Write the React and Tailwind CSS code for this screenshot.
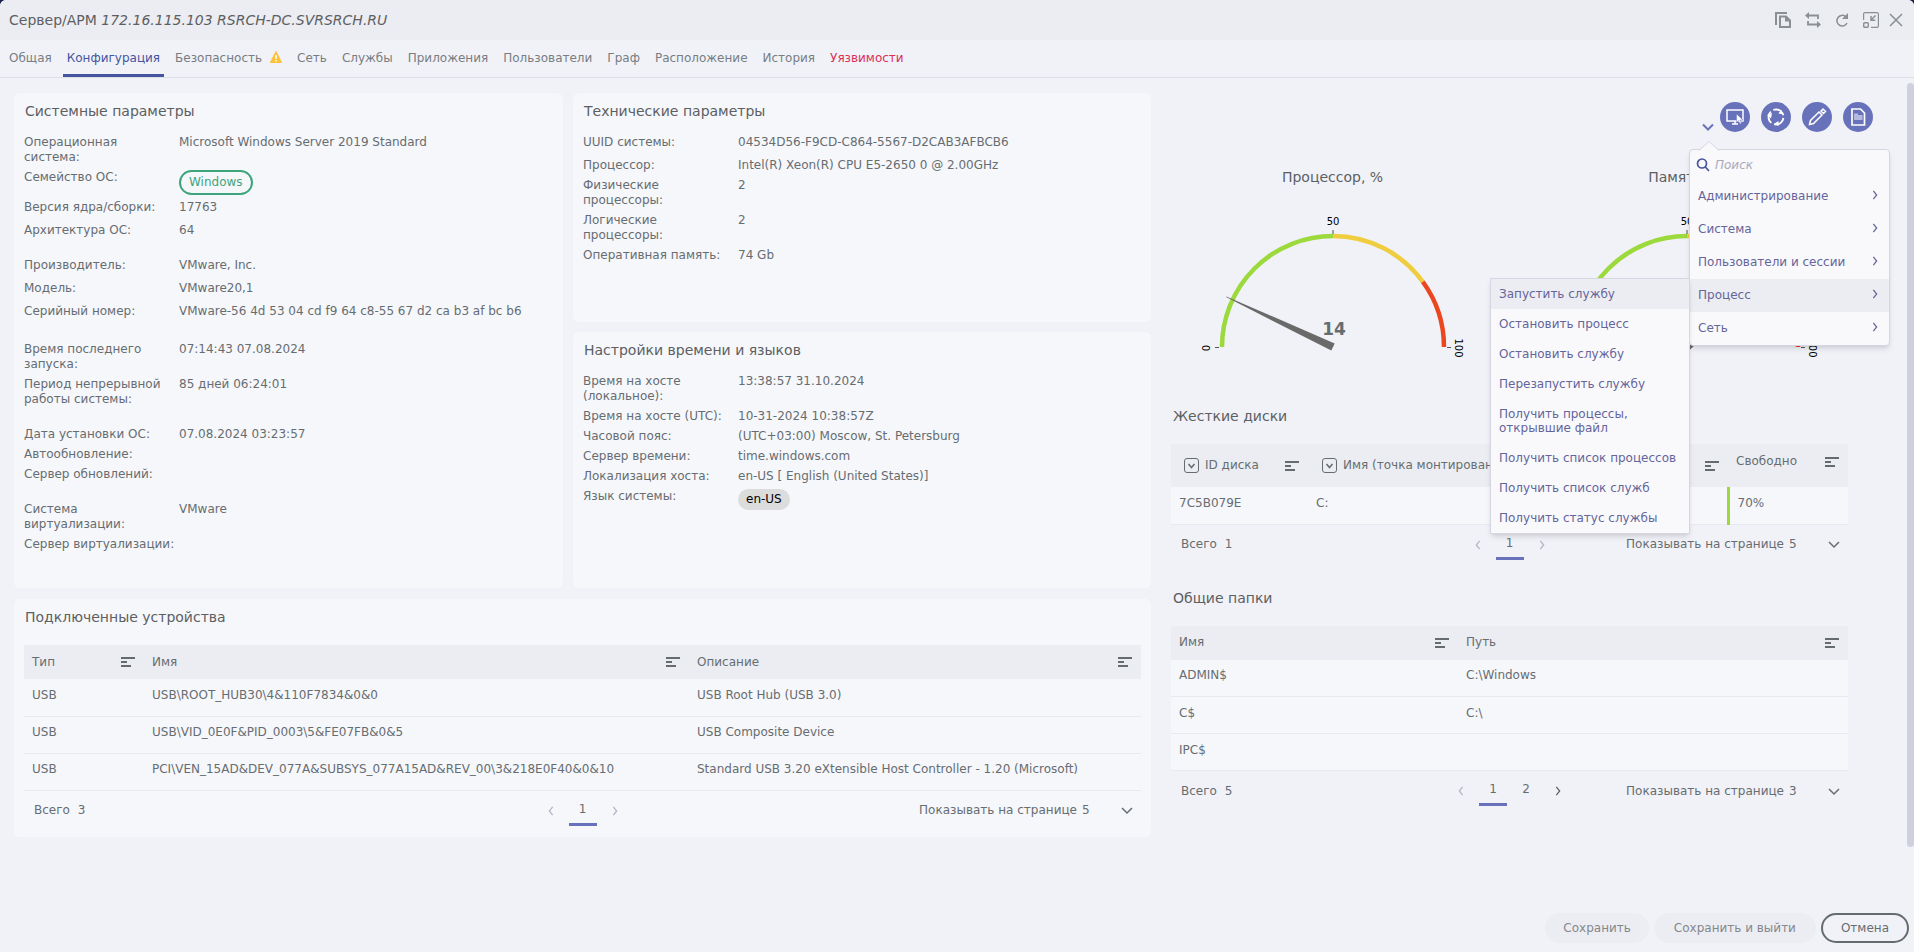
import { useState } from "react";

const tabs = [
  { name: "Общая" },
  { name: "Конфигурация" },
  { name: "Безопасность", warning: true },
  { name: "Сеть" },
  { name: "Службы" },
  { name: "Приложения" },
  { name: "Пользователи" },
  { name: "Граф" },
  { name: "Расположение" },
  { name: "История" },
  { name: "Уязвимости", danger: true },
];

// tall - row with the bigger bottom padding, last - last row of its group
const systemParams = [
  { label: "Операционная система:", value: "Microsoft Windows Server 2019 Standard" },
  { label: "Семейство ОС:", badge: "Windows" },
  { label: "Версия ядра/сборки:", value: "17763", tall: true },
  { label: "Архитектура ОС:", value: "64", last: true },
  { label: "Производитель:", value: "VMware, Inc.", tall: true },
  { label: "Модель:", value: "VMware20,1", tall: true },
  { label: "Серийный номер:", value: "VMware-56 4d 53 04 cd f9 64 c8-55 67 d2 ca b3 af bc b6", tall: true, last: true },
  { label: "Время последнего запуска:", value: "07:14:43 07.08.2024" },
  { label: "Период непрерывной работы системы:", value: "85 дней 06:24:01", last: true },
  { label: "Дата установки ОС:", value: "07.08.2024 03:23:57" },
  { label: "Автообновление:" },
  { label: "Сервер обновлений:", last: true },
  { label: "Система виртуализации:", value: "VMware" },
  { label: "Сервер виртуализации:" },
];

const techParams = [
  { label: "UUID системы:", value: "04534D56-F9CD-C864-5567-D2CAB3AFBCB6", tall: true },
  { label: "Процессор:", value: "Intel(R) Xeon(R) CPU E5-2650 0 @ 2.00GHz" },
  { label: "Физические процессоры:", value: "2" },
  { label: "Логические процессоры:", value: "2" },
  { label: "Оперативная память:", value: "74 Gb" },
];

const timeParams = [
  { label: "Время на хосте (локальное):", value: "13:38:57 31.10.2024" },
  { label: "Время на хосте (UTC):", value: "10-31-2024 10:38:57Z" },
  { label: "Часовой пояс:", value: "(UTC+03:00) Moscow, St. Petersburg" },
  { label: "Сервер времени:", value: "time.windows.com" },
  { label: "Локализация хоста:", value: "en-US [ English (United States)]" },
  { label: "Язык системы:", chip: "en-US" },
];

const devices = [
  ["USB", "USB\\ROOT_HUB30\\4&110F7834&0&0", "USB Root Hub (USB 3.0)"],
  ["USB", "USB\\VID_0E0F&PID_0003\\5&FE07FB&0&5", "USB Composite Device"],
  [
    "USB",
    "PCI\\VEN_15AD&DEV_077A&SUBSYS_077A15AD&REV_00\\3&218E0F40&0&10",
    "Standard USB 3.20 eXtensible Host Controller - 1.20 (Microsoft)",
  ],
];

const folders = [
  ["ADMIN$", "C:\\Windows"],
  ["C$", "C:\\"],
  ["IPC$", ""],
];

const menuItems = ["Администрирование", "Система", "Пользователи и сессии", "Процесс", "Сеть"];

const processItems = [
  "Запустить службу",
  "Остановить процесс",
  "Остановить службу",
  "Перезапустить службу",
  "Получить процессы, открывшие файл",
  "Получить список процессов",
  "Получить список служб",
  "Получить статус службы",
];

function Chevron({ dir = "down", className = "" }) {
  const paths = {
    down: "M1 3l5 5 5-5",
    left: "M8 1L4 6l4 5",
    right: "M4 1l4 5-4 5",
  };
  return (
    <svg viewBox="0 0 12 12" className={className} fill="none" stroke="currentColor" strokeWidth="1.5">
      <path d={paths[dir]} />
    </svg>
  );
}

function SortButton({ name }) {
  return (
    <button type="button" aria-label={`Сортировать: ${name}`} className="shrink-0 text-[#646c70]">
      <svg viewBox="0 0 14 10" className="block h-[10px] w-[14px]" fill="currentColor">
        <path d="M0 0h14v2H0zM0 4h6v2H0zM0 8h10v2H0z" />
      </svg>
    </button>
  );
}

function FilterBox({ name }) {
  return (
    <button type="button" aria-label={`Фильтр: ${name}`} className="shrink-0">
      <svg viewBox="0 0 15 15" className="block h-[15px] w-[15px]" fill="none" stroke="currentColor">
        <rect x="0.5" y="0.5" width="14" height="14" rx="2.5" />
        <path d="M4.5 6l3 3.5 3-3.5" strokeWidth="1.5" />
      </svg>
    </button>
  );
}

function Card({ title, className = "", children }) {
  return (
    <section className={`rounded-md bg-[#f6f7fb] px-[10px] pt-2 ${className}`}>
      <h2 className="pl-px text-sm leading-5 text-[#5c6062]">{title}</h2>
      {children}
    </section>
  );
}

function Params({ rows }) {
  return (
    <dl className="mt-[14px]">
      {rows.map((row) => (
        <div key={row.label} className={`flex ${row.tall ? "pb-2" : "pb-[5px]"} ${row.last ? "mb-[15px]" : ""}`}>
          <dt className="w-[155px] shrink-0 pr-[3px]">{row.label}</dt>
          <dd>
            {row.value}
            {row.badge && (
              <span className="flex h-[25px] items-center rounded-full border-2 border-[#3da57c] px-2 text-[#3da57c]">
                {row.badge}
              </span>
            )}
            {row.chip && (
              <span className="flex h-[21px] items-center rounded-full bg-[#dcdcdc] px-2 text-black">{row.chip}</span>
            )}
          </dd>
        </div>
      ))}
    </dl>
  );
}

function Pager({ total, pages, perPage, id }) {
  return (
    <div className="grid h-10 grid-cols-[1fr_auto_1fr] items-center">
      <div className="flex gap-2 pl-[10px]">
        <span>Всего</span>
        <span>{total}</span>
      </div>
      <nav className="flex items-center gap-[5px]">
        <button type="button" disabled aria-label="Назад" className="flex w-[26px] justify-center text-[#b3b3c6]">
          <Chevron dir="left" className="h-[10px] w-[10px]" />
        </button>
        {pages.map((p) => (
          <button
            key={p}
            type="button"
            className={`h-[30px] w-[28px] border-b-[3px] ${p === 1 ? "border-[#6872ba]" : "border-transparent"}`}
          >
            {p}
          </button>
        ))}
        <button
          type="button"
          disabled={pages.length === 1}
          aria-label="Вперед"
          className="flex w-[26px] justify-center text-[#5c6062] disabled:text-[#b3b3c6]"
        >
          <Chevron dir="right" className="h-[10px] w-[10px]" />
        </button>
      </nav>
      <div className="flex items-center justify-end">
        <label htmlFor={id} className="mr-[5px]">
          Показывать на странице
        </label>
        <div className="relative w-[59px]">
          <select id={id} defaultValue={perPage} className="block w-full appearance-none bg-transparent">
            <option>{perPage}</option>
          </select>
          <Chevron className="pointer-events-none absolute top-[2px] right-2 h-3 w-3" />
        </div>
      </div>
    </div>
  );
}

function Th({ children, width = "" }) {
  return (
    <th className={`p-0 font-normal ${width}`}>
      <div className="flex items-center justify-between pr-[9px] pl-2">
        <span>{children}</span>
        <SortButton name={children} />
      </div>
    </th>
  );
}

function Gauge({ title, value }) {
  const angle = (value / 100) * 180;
  return (
    <div className="flex flex-col items-center">
      <h2 className="text-sm leading-5 text-[#5c6062]">{title}</h2>
      <svg viewBox="0 0 280 150" className="mt-[25px] h-[150px] w-[280px]" fontSize="10" textAnchor="middle">
        <g fill="none" strokeWidth="4.5">
          <path d="M29 135A111 111 0 0 1 140 24" stroke="#9cd93c" />
          <path d="M140 24A111 111 0 0 1 229.8 69.8" stroke="#efcd3f" />
          <path d="M229.8 69.8A111 111 0 0 1 251 135" stroke="#ec4620" />
        </g>
        <path d="M140 18v4M22 135.500h4M254 135.500h4" stroke="#555" />
        <text x="140" y="13">50</text>
        <text transform="translate(17 136) rotate(-90)">0</text>
        <text transform="translate(262 136) rotate(90)">100</text>
        <text x="141" y="123" fontSize="17" fontWeight="bold" fill="#646e70">
          {value}
        </text>
        <path d="M22 134.600L140 131v8L22 135.400z" fill="#6a6a6a" transform={`rotate(${angle} 140 135)`} />
      </svg>
    </div>
  );
}

function RoundButton({ label, children }) {
  return (
    <button
      type="button"
      aria-label={label}
      className="flex h-[30px] w-[30px] items-center justify-center rounded-full bg-[#6872ba] text-white"
    >
      <svg viewBox="0 0 20 20" className="h-5 w-5" fill="none" stroke="currentColor" strokeWidth="1.5">
        {children}
      </svg>
    </button>
  );
}

function ActionsMenu() {
  return (
    <div className="absolute top-[28px] left-[-13px] z-10 w-[201px] rounded-sm border border-[#d5d6e2] bg-[#f9f9fc] text-[#65659a] shadow-md">
      <svg viewBox="0 0 20 10" className="absolute -top-[9px] left-[9px] h-[10px] w-5" fill="#f9f9fc" stroke="#d5d6e2">
        <path d="M0 9.500L10 0.500l10 9" />
      </svg>
      <div className="flex h-[30px] items-center gap-[5px] pl-[6px]">
        <svg viewBox="0 0 14 14" className="h-[14px] w-[14px] shrink-0" fill="none" stroke="#44549e" strokeWidth="1.700">
          <circle cx="6" cy="5.500" r="4.500" />
          <path d="M9.300 9l3.700 4" />
        </svg>
        <input
          type="text"
          aria-label="Поиск"
          placeholder="Поиск"
          className="w-full min-w-0 bg-transparent italic outline-none placeholder:text-[#a9a9ba]"
        />
      </div>
      <ul>
        {menuItems.map((item) => (
          <li key={item} className="relative">
            <button
              type="button"
              className={`flex h-[33px] w-full items-center justify-between pr-[9px] pl-2 ${
                item === "Процесс" ? "bg-[#ecedf2]" : ""
              }`}
            >
              {item}
              <Chevron dir="right" className="mb-1 h-[10px] w-[10px]" />
            </button>
            {item === "Процесс" && (
              <ul className="absolute -top-px right-full w-[200px] border border-[#d5d6e2] bg-[#f9f9fc] shadow-md">
                {processItems.map((p, i) => (
                  <li key={p}>
                    <button
                      type="button"
                      className={`block w-full py-2 pr-1 pl-2 text-left leading-[14px] ${i === 0 ? "bg-[#ecedf2]" : ""}`}
                    >
                      {p}
                    </button>
                  </li>
                ))}
              </ul>
            )}
          </li>
        ))}
      </ul>
    </div>
  );
}

function Header() {
  return (
    <header className="flex h-10 shrink-0 items-center justify-between bg-[#ecedf2] pr-[11px] pl-[9px]">
      <h1 className="text-sm text-[#5c6062]">
        Сервер/АРМ <i>172.16.115.103 RSRCH-DC.SVRSRCH.RU</i>
      </h1>
      <div className="flex items-center gap-[14px] text-[#8a8f93]">
        <button type="button" aria-label="Копировать">
          <svg viewBox="0 0 16 16" className="h-4 w-4" fill="none" stroke="currentColor" strokeWidth="2">
            <path d="M1 13V1h11" />
            <path d="M5 4.500h6L15 8.500V15H5z" />
            <path d="M10 4v5.500h5z" fill="currentColor" stroke="none" />
          </svg>
        </button>
        <button type="button" aria-label="Переключить">
          <svg viewBox="0 0 16 16" className="h-4 w-4" fill="none" stroke="currentColor" strokeWidth="1.800">
            <path d="M13 7V3.500H2M3 9v3.500h11" />
            <path d="M4 0v7L0 3.500zM12 9v7l4-3.500z" fill="currentColor" stroke="none" />
          </svg>
        </button>
        <button type="button" aria-label="Обновить">
          <svg viewBox="0 0 14 16" className="h-4 w-[14px]" fill="none" stroke="currentColor" strokeWidth="1.500">
            <path d="M10.500 4.500A5.300 5.300 0 1 0 12 11" />
            <path d="M13 1v6H7z" fill="currentColor" stroke="none" />
          </svg>
        </button>
        <button type="button" aria-label="Свернуть">
          <svg viewBox="0 0 16 16" className="h-4 w-4" fill="none" stroke="currentColor" strokeWidth="1.200">
            <path d="M0.600 8V2a1.400 1.400 0 0 1 1.400-1.400h12a1.400 1.400 0 0 1 1.400 1.400v12a1.400 1.400 0 0 1-1.400 1.400H8" />
            <rect x="0.700" y="10.700" width="4.600" height="4.600" rx="1" strokeWidth="1.400" />
            <path d="M12.500 3.500L8.500 7.500M8 4v4.200h4.200" strokeWidth="1.500" />
          </svg>
        </button>
        <button type="button" aria-label="Закрыть" className="-ml-1">
          <svg viewBox="0 0 14 14" className="h-[14px] w-[14px]" fill="none" stroke="currentColor" strokeWidth="1.500">
            <path d="M1 1l12 12M13 1L1 13" />
          </svg>
        </button>
      </div>
    </header>
  );
}

export default function App() {
  const [activeTab, setActiveTab] = useState("Конфигурация");

  return (
    <div className="h-screen bg-[#1c2050] font-['DejaVu_Sans',Verdana,sans-serif] text-xs leading-[15px] text-[#666d71]">
      <div className="flex h-full flex-col overflow-hidden rounded-t-md bg-[#f1f2f8]">
        <Header />

        <nav className="flex h-[38px] shrink-0 items-end gap-[7px] border-b border-[#dfe0e7] pl-[5px]">
          {tabs.map((tab) => {
            const active = tab.name === activeTab;
            return (
              <button
                key={tab.name}
                type="button"
                onClick={() => setActiveTab(tab.name)}
                className={`flex h-[37px] items-center gap-2 border-b-[3px] px-1 pt-[2px] ${
                  active ? "border-[#44549e] text-[#44549e]" : "border-transparent"
                } ${tab.danger ? "text-[#dc3058]" : ""} ${!active && !tab.danger ? "text-[#787d82]" : ""}`}
              >
                {tab.name}
                {tab.warning && (
                  <svg viewBox="0 0 12 12" className="mb-[2px] h-3 w-3">
                    <path d="M6 0.500L11.700 11.500H0.300z" fill="#fcc23c" stroke="#fcc23c" strokeLinejoin="round" />
                    <path d="M6 4v4M6 9v1.500" stroke="#fff" strokeWidth="1.500" />
                  </svg>
                )}
              </button>
            );
          })}
        </nav>

        <main className="flex min-h-0 flex-1">
          <div className="grid flex-1 grid-cols-[1137fr_702fr] items-start gap-5 pt-[15px] pr-[34px] pl-[14px]">
            <div>
              <div className="grid grid-cols-[549fr_578fr] gap-[10px]">
                <Card title="Системные параметры" className="row-span-2">
                  <Params rows={systemParams} />
                </Card>
                <Card title="Технические параметры" className="min-h-[229px]">
                  <Params rows={techParams} />
                </Card>
                <Card title="Настройки времени и языков" className="min-h-[256px]">
                  <Params rows={timeParams} />
                </Card>
              </div>

              <Card title="Подключенные устройства" className="mt-[11px] pb-[6px]">
                <table className="mt-[18px] w-full table-fixed text-left">
                  <thead>
                    <tr className="h-[34px] bg-[#ecedf2]">
                      <Th width="w-[120px]">Тип</Th>
                      <Th width="w-[545px]">Имя</Th>
                      <Th>Описание</Th>
                    </tr>
                  </thead>
                  <tbody>
                    {devices.map((row) => (
                      <tr key={row[1]} className="h-[37px] border-b border-[#e9eaf0]">
                        {row.map((cell, i) => (
                          <td key={i} className="pb-1 pl-2">
                            {cell}
                          </td>
                        ))}
                      </tr>
                    ))}
                  </tbody>
                </table>
                <Pager id="devices-per-page" total={3} pages={[1]} perPage={5} />
              </Card>
            </div>

            <div className="pt-[9px]">
              <div className="flex justify-end gap-[11px]">
                <div className="relative mt-[19px] -mr-[5px] w-3">
                  <button type="button" aria-label="Действия" className="block text-[#6872ba]">
                    <svg viewBox="0 0 12 12" className="h-3 w-3" fill="none" stroke="currentColor" strokeWidth="2">
                      <path d="M1 3.500l5 5 5-5" />
                    </svg>
                  </button>
                  <ActionsMenu />
                </div>
                <RoundButton label="Удаленный экран">
                  <rect x="2" y="3" width="16" height="11" />
                  <path d="M10 14v3M7 17h6" />
                  <path d="M11.500 7v8.500l2-2 1.500 3.500 1.500-.7-1.500-3.300h3z" fill="#fff" stroke="#6872ba" strokeWidth="0.500" />
                </RoundButton>
                <RoundButton label="Синхронизировать">
                  <circle cx="10" cy="10" r="7.500" strokeWidth="1.800" strokeDasharray="12.700 3" strokeDashoffset="-1" />
                  <path d="M15 2.500l2.500 5-5-1zM1 8l5-2-1 5.500zM12.500 14v5l-4-2.500z" fill="currentColor" stroke="none" />
                </RoundButton>
                <RoundButton label="Редактировать">
                  <path d="M2.500 17.500l1-4 8.500-8.500 3 3-8.500 8.500z" />
                  <path d="M14 4l2-2L18.500 4.500l-2 2z" />
                </RoundButton>
                <RoundButton label="Отчет">
                  <path d="M4 2h8.500L16.500 6v12H4z" strokeWidth="1.700" />
                  <path d="M6 6.500h4v1.500h4.500v5H6z" fill="#b4b9e0" stroke="none" />
                </RoundButton>
              </div>

              <div className="mr-[25px]">
                <div className="mt-[34px] grid grid-cols-2 gap-[31px]">
                  <Gauge title="Процессор, %" value={14} />
                  <Gauge title="Память, %" value={77} />
                </div>

                <h2 className="mt-11 pl-[2px] text-sm leading-5 text-[#5c6062]">Жесткие диски</h2>
                <table className="mt-[18px] w-full table-fixed text-left">
                  <thead>
                    <tr className="h-[43px] bg-[#ecedf2]">
                      <th className="w-[137px] p-0 font-normal">
                        <div className="flex items-center gap-[6px] pr-[9px] pl-[13px]">
                          <FilterBox name="ID диска" />
                          <span className="flex-1">ID диска</span>
                          <SortButton name="ID диска" />
                        </div>
                      </th>
                      <th className="p-0 font-normal">
                        <div className="flex items-center gap-[6px] pr-[9px] pl-[14px]">
                          <FilterBox name="Имя" />
                          <span className="flex-1">Имя (точка монтирования)</span>
                          <SortButton name="Имя" />
                        </div>
                      </th>
                      <th className="w-[120px] p-0 pb-2 font-normal">
                        <div className="flex items-center justify-between pr-[9px] pl-2">
                          <span>Свободно</span>
                          <SortButton name="Свободно" />
                        </div>
                      </th>
                    </tr>
                  </thead>
                  <tbody>
                    <tr className="h-[37px] border-b border-[#e9eaf0] bg-[#f6f7fb]">
                      <td className="pb-1 pl-2">7C5B079E</td>
                      <td className="pb-1 pl-2">C:</td>
                      <td className="border-l-[3px] border-l-[#9cd93c] pb-1 pl-2">70%</td>
                    </tr>
                  </tbody>
                </table>
                <Pager id="disks-per-page" total={1} pages={[1]} perPage={5} />

                <h2 className="mt-[23px] pl-[2px] text-sm leading-5 text-[#5c6062]">Общие папки</h2>
                <table className="mt-[18px] w-full table-fixed text-left">
                  <thead>
                    <tr className="h-[34px] bg-[#ecedf2]">
                      <Th width="w-[287px]">Имя</Th>
                      <Th>Путь</Th>
                    </tr>
                  </thead>
                  <tbody>
                    {folders.map((row) => (
                      <tr key={row[0]} className="h-[37px] border-b border-[#e9eaf0] bg-[#f6f7fb]">
                        <td className="pb-1 pl-2">{row[0]}</td>
                        <td className="pb-1 pl-2">{row[1]}</td>
                      </tr>
                    ))}
                  </tbody>
                </table>
                <Pager id="folders-per-page" total={5} pages={[1, 2]} perPage={3} />
              </div>
            </div>
          </div>

          <div className="w-[7px] pt-[5px]">
            <div className="h-[92%] rounded-full bg-[#cfd0de]" />
          </div>
        </main>

        <footer className="flex shrink-0 justify-end gap-[5px] pr-[5px] pb-[9px]">
          <button type="button" disabled className="h-[30px] rounded-full bg-[#ecedf2] px-[18px] text-[#85878c]">
            Сохранить
          </button>
          <button type="button" disabled className="h-[30px] rounded-full bg-[#ecedf2] px-5 text-[#85878c]">
            Сохранить и выйти
          </button>
          <button type="button" className="h-[30px] rounded-full border-2 border-[#646c70] px-[18px]">
            Отмена
          </button>
        </footer>
      </div>
    </div>
  );
}
